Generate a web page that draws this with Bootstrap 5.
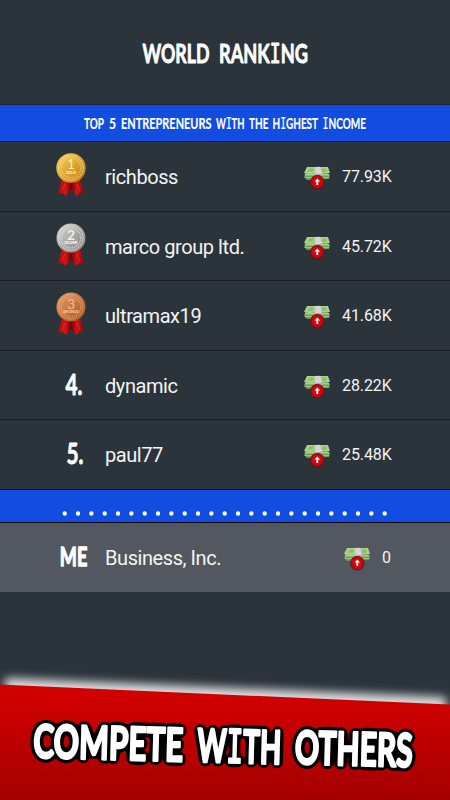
<!DOCTYPE html>
<html lang="en">
<head>
<meta charset="utf-8">
<meta name="viewport" content="width=device-width, initial-scale=1">
<title>World Ranking</title>
<link rel="stylesheet" href="https://cdn.jsdelivr.net/npm/bootstrap@5.3.0/dist/css/bootstrap.min.css">
<style>
body{background:#2b333b;font-family:Roboto,sans-serif;color:#f4f4f4;width:450px;height:800px}
svg{display:block;overflow:visible}
.hand{font-family:Lato,sans-serif;font-weight:700;fill:#fff;stroke:#fff;stroke-linejoin:round}
.slab{font-family:"DejaVu Sans Mono",monospace;font-weight:400}
.top-bar{height:105px;border-bottom:1px solid #20262c}
.blue-bar{background:#134ce0;height:36px}
.rank-row{height:69.5px;border-top:1px solid #191d22;padding-left:51px;padding-right:58px}
.rank-name{font-size:20px;letter-spacing:-.43px;width:199px;margin-left:14px;line-height:24px;padding-top:2px}
.cash-icon{margin-top:4px}
.amount{font-size:16px;letter-spacing:-.1px;line-height:20px;margin-left:12px;padding-top:2px}
.dots-bar{background:#134ce0;height:34px;border-top:1px solid #060a18;border-bottom:1px solid #05070c}
.me-row{background:#53575f;height:69px;padding-left:51px;padding-right:58px}
.me-row .rank-name{width:239px}
.banner{height:140px}
</style>
</head>
<body class="d-flex flex-column overflow-hidden">
<svg width="0" height="0" class="position-absolute" aria-hidden="true">
<defs>
<linearGradient id="gold" x2="1" y2="1"><stop stop-color="#f8d76d"/><stop offset=".5" stop-color="#dda530"/><stop offset="1" stop-color="#b97a13"/></linearGradient>
<linearGradient id="silver" x2="1" y2="1"><stop stop-color="#dededc"/><stop offset=".5" stop-color="#aaa9a7"/><stop offset="1" stop-color="#85837f"/></linearGradient>
<linearGradient id="bronze" x2="1" y2="1"><stop stop-color="#e9a06a"/><stop offset=".5" stop-color="#c97842"/><stop offset="1" stop-color="#9b5127"/></linearGradient>
<linearGradient id="ribbon"><stop stop-color="#b00c0f"/><stop offset=".3" stop-color="#d81316"/><stop offset=".5" stop-color="#6c0406"/><stop offset=".72" stop-color="#d01316"/><stop offset="1" stop-color="#8e080a"/></linearGradient>
<radialGradient id="redball"><stop stop-color="#d60d12"/><stop offset=".75" stop-color="#c8060c"/><stop offset="1" stop-color="#8c0408"/></radialGradient>
<linearGradient id="redfield" x2="0" y2="1"><stop stop-color="#d40000"/><stop offset=".3" stop-color="#c80000"/><stop offset="1" stop-color="#a40000"/></linearGradient>
<filter id="glow" x="-10%" y="-60%" width="120%" height="220%"><feGaussianBlur stdDeviation="5"/></filter>
<filter id="outline" x="-5%" y="-25%" width="110%" height="150%" color-interpolation-filters="sRGB"><feGaussianBlur in="SourceAlpha" stdDeviation="2.9"/><feComponentTransfer><feFuncA type="linear" slope="16" intercept="-.9"/></feComponentTransfer><feMerge><feMergeNode/><feMergeNode in="SourceGraphic"/></feMerge></filter>
<symbol id="tails" viewBox="0 0 40 50"><path d="M11 28 7 42.5l4-.5 4 3 5-7 5 7 4-3 4 .5-4-14.5z" fill="url(#ribbon)"/><path d="M14 33 11 40M26 33l3 7" stroke="#e8453f" stroke-width=".5"/></symbol>
<symbol id="cash" viewBox="0 0 26 24">
<path d="M2 5 20 4l6 5-1 4L3 14 0 11z" fill="#719a5f"/>
<path d="M3 1 24 1l2 6-21 1-5-1z" fill="#a9d28c"/>
<path d="M1 8 25 8v1.5H1z" fill="#a9cf8e"/><path d="M1 11h24v1H1z" fill="#9cc581"/>
<path d="M6 2.5h4l-1 3-6 .5zM18 2.5h4l1 3-5 .5z" fill="#8dba74"/>
<path d="m11 1 5-.3 1.8 6.8V12h-6z" fill="#d8d4d6"/><path d="M11.8 8h6v4h-6z" fill="#aaa6aa"/>
<circle cx="13.3" cy="16.5" r="7.4" fill="#24272b" opacity=".4"/><circle cx="13.3" cy="16" r="7" fill="url(#redball)"/>
<path d="m13.3 12.4-2.7 3.2h1.8V19h1.8v-3.4H16z" fill="#fff"/>
</symbol>
</defs>
</svg>

<header class="top-bar flex-shrink-0">
<svg width="450" height="104"><g class="hand" font-size="27" stroke-width=".9">
<text x="142.5" y="62.5" textLength="67" lengthAdjust="spacingAndGlyphs">WORLD</text>
<text x="219" y="62.5" textLength="89" lengthAdjust="spacingAndGlyphs">RANK<tspan class="slab">I</tspan>NG</text></g></svg>
</header>
<div class="blue-bar flex-shrink-0">
<svg width="450" height="36"><g class="hand" font-size="16" stroke-width=".2">
<text x="84" y="23.5" textLength="20" lengthAdjust="spacingAndGlyphs">TOP</text>
<text x="109" y="23.5" textLength="7" lengthAdjust="spacingAndGlyphs">5</text>
<text x="121" y="23.5" textLength="90.5" lengthAdjust="spacingAndGlyphs">ENTREPRENEURS</text>
<text x="216" y="23.5" textLength="28.5" lengthAdjust="spacingAndGlyphs">W<tspan class="slab">I</tspan>TH</text>
<text x="249" y="23.5" textLength="19.5" lengthAdjust="spacingAndGlyphs">THE</text>
<text x="272.5" y="23.5" textLength="45.5" lengthAdjust="spacingAndGlyphs">H<tspan class="slab">I</tspan>GHEST</text>
<text x="322.5" y="23.5" textLength="43.5" lengthAdjust="spacingAndGlyphs"><tspan class="slab">I</tspan>NCOME</text></g></svg>
</div>
<main class="flex-shrink-0">
<div class="rank-row d-flex align-items-center">
<svg width="40" height="50"><use href="#tails" width="40" height="50"/><circle cx="20" cy="17" r="14.7" fill="url(#gold)"/><circle cx="20" cy="17" r="12.2" fill="none" stroke="#f7da7b" stroke-width=".7"/><circle cx="20" cy="17" r="9.8" fill="none" stroke="#f5d985" stroke-dasharray="1.2 1" stroke-width="1.5" opacity=".7"/><text x="20" y="18" text-anchor="middle" font-size="13" fill="#fff0b0" font-family="Lato">1</text><text x="20" y="23" text-anchor="middle" font-size="4" font-weight="bold" fill="#fff0b0">GOLD</text></svg>
<div class="rank-name">richboss</div><svg class="cash-icon" width="26" height="24"><use href="#cash" width="26" height="24"/></svg><div class="amount">77.93K</div></div>
<div class="rank-row d-flex align-items-center">
<svg width="40" height="50"><use href="#tails" width="40" height="50"/><circle cx="20" cy="17" r="14.5" fill="url(#silver)"/><circle cx="20" cy="17" r="12.2" fill="none" stroke="#dddcda" stroke-width=".7"/><circle cx="20" cy="17" r="9.8" fill="none" stroke="#e7e5e1" stroke-dasharray="1.2 1" stroke-width="1.5" opacity=".7"/><text x="20" y="18.5" text-anchor="middle" font-size="14" font-weight="bold" fill="#eee" font-family="Lato">2</text><text x="20" y="23" text-anchor="middle" font-size="4" font-weight="bold" fill="#fff">SILVER</text></svg>
<div class="rank-name">marco group ltd.</div><svg class="cash-icon" width="26" height="24"><use href="#cash" width="26" height="24"/></svg><div class="amount">45.72K</div></div>
<div class="rank-row d-flex align-items-center">
<svg width="40" height="50"><use href="#tails" width="40" height="50"/><circle cx="20" cy="17" r="14.5" fill="url(#bronze)"/><circle cx="20" cy="17" r="12.2" fill="none" stroke="#eca672" stroke-width=".7"/><circle cx="20" cy="17" r="9.8" fill="none" stroke="#efaf80" stroke-dasharray="1.2 1" stroke-width="1.5" opacity=".7"/><text x="20" y="18.5" text-anchor="middle" font-size="14" fill="#f7bd92" font-family="Lato">3</text><text x="20" y="23" text-anchor="middle" font-size="4" font-weight="bold" fill="#f9c49c">BRONZE</text></svg>
<div class="rank-name">ultramax19</div><svg class="cash-icon" width="26" height="24"><use href="#cash" width="26" height="24"/></svg><div class="amount">41.68K</div></div>
<div class="rank-row d-flex align-items-center">
<svg width="40" height="50"><text class="hand" x="14.5" y="34.5" font-size="28" stroke-width=".8" textLength="17" lengthAdjust="spacingAndGlyphs">4.</text></svg>
<div class="rank-name">dynamic</div><svg class="cash-icon" width="26" height="24"><use href="#cash" width="26" height="24"/></svg><div class="amount">28.22K</div></div>
<div class="rank-row d-flex align-items-center">
<svg width="40" height="50"><text class="hand" x="15.5" y="35" font-size="28" stroke-width=".8" textLength="17" lengthAdjust="spacingAndGlyphs">5.</text></svg>
<div class="rank-name">paul77</div><svg class="cash-icon" width="26" height="24"><use href="#cash" width="26" height="24"/></svg><div class="amount">25.48K</div></div>
</main>
<div class="dots-bar flex-shrink-0"><svg width="450" height="32"><path d="M64.7 23.5H386" stroke="#fff" stroke-width="4.4" stroke-linecap="round" stroke-dasharray="0 13.333"/></svg></div>
<div class="me-row d-flex align-items-center flex-shrink-0">
<svg width="40" height="50"><text class="hand" x="8.8" y="34" font-size="27" stroke-width="1.3" textLength="27.5" lengthAdjust="spacingAndGlyphs">ME</text></svg>
<div class="rank-name">Business, Inc.</div><svg class="cash-icon" width="26" height="24"><use href="#cash" width="26" height="24"/></svg><div class="amount">0</div></div>
<footer class="banner mt-auto flex-shrink-0">
<svg width="450" height="140">
<path d="M7 20 444 39v16L7 36z" fill="#fff" stroke="#fff" stroke-width="4" filter="url(#glow)" opacity=".84"/>
<path d="M0 24.5 450 44.5V140H0z" fill="url(#redfield)"/>
<g filter="url(#outline)"><g class="hand" transform="rotate(1.5 34 97)" font-size="46" stroke-width="2.5">
<text x="33" y="97.5" textLength="150" lengthAdjust="spacingAndGlyphs">COMPETE</text>
<text x="197" y="97.5" textLength="84" lengthAdjust="spacingAndGlyphs">W<tspan class="slab">I</tspan>TH</text>
<text x="294.5" y="97" textLength="118" lengthAdjust="spacingAndGlyphs">OTHERS</text>
</g></g>
</svg>
</footer>
<script src="https://cdn.jsdelivr.net/npm/bootstrap@5.3.0/dist/js/bootstrap.bundle.min.js"></script>
</body>
</html>
